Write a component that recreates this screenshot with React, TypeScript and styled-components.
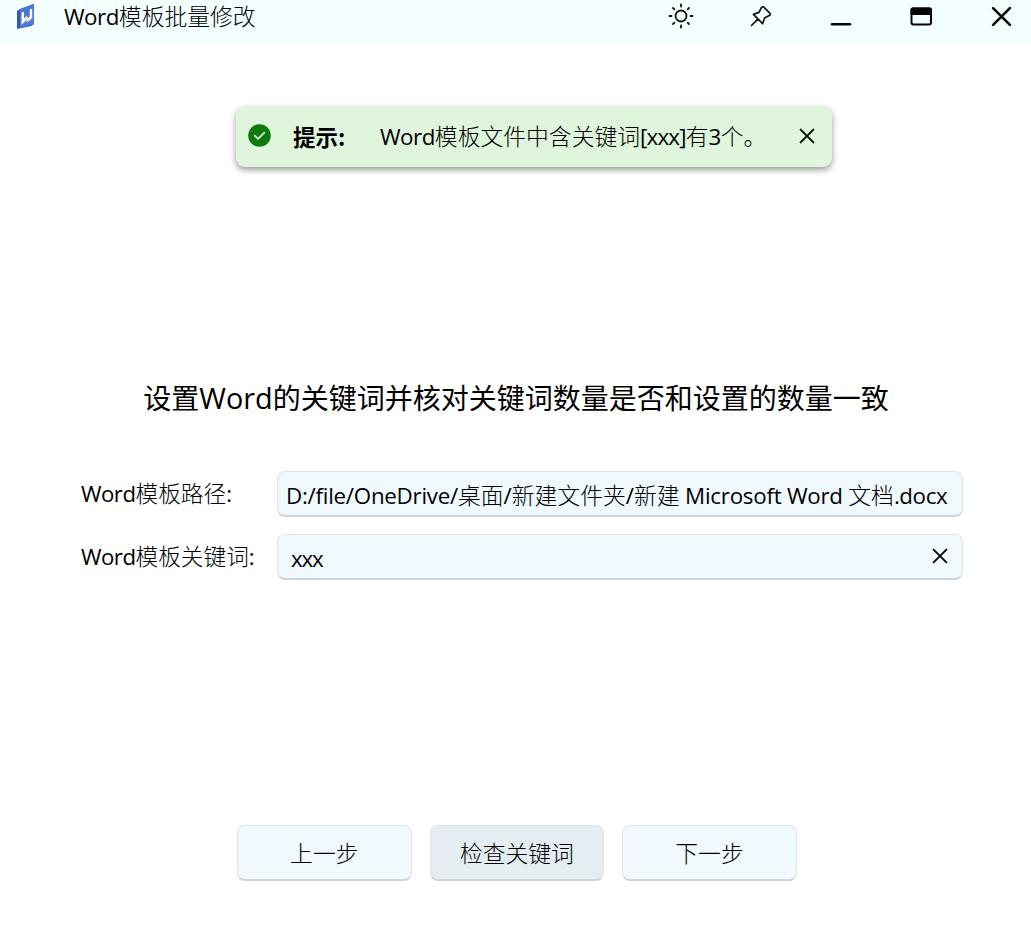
import React from 'react';
import styled, { createGlobalStyle } from 'styled-components';

const Global = createGlobalStyle`
  * { box-sizing: border-box; }
  body { margin: 0; background: #fff; }
`;

const Window = styled.div`
  position: relative;
  width: 1031px;
  height: 946px;
  overflow: hidden;
  display: flex;
  flex-direction: column;
  background: #fff;
  color: #000;
  font-family: 'Noto Sans CJK SC', sans-serif;
  font-size: 22.8px;
  font-weight: 300;
  line-height: 32px;
  white-space: nowrap;
`;

const Latin = styled.span<{ $track?: number; $scale?: number }>`
  font-family: 'Open Sans', 'Noto Sans', sans-serif;
  font-weight: 400;
  font-size: ${p => p.$scale ?? 0.98}em;
  letter-spacing: ${p => p.$track ?? -0.5}px;
`;

const TitleBar = styled.header`
  height: 43px;
  flex: none;
  display: flex;
  align-items: flex-start;
  background: #f3ffff;
  padding-left: 16px;
  svg { display: block; }
`;

const Logo = styled.svg`
  margin: 3px 29px 0 0;
`;

const Title = styled.div`
  flex: 1;
`;

const WindowButtons = styled.div`
  display: grid;
  grid-template-columns: repeat(5, 80.3px);
  width: 390.5px;
`;

const WindowButton = styled.button`
  width: 80px;
  height: 32px;
  padding: 0;
  border: 0;
  background: none;
  display: flex;
  align-items: center;
  justify-content: center;
`;

const Toast = styled.div`
  position: absolute;
  left: 236px;
  top: 106px;
  width: 596px;
  height: 61px;
  border-radius: 9px;
  background: #dff6dd;
  box-shadow: 0 3px 6px rgba(0, 0, 0, 0.4);
  display: flex;
  align-items: center;
  padding: 0 17.5px 2px 11.5px;
`;

const ToastLabel = styled.strong`
  width: 87px;
  margin-left: 22.5px;
  font-size: 22.5px;
  font-weight: 600;
`;

const ToastText = styled.span`
  flex: 1;
  padding-top: 1px;
`;

const Heading = styled.h1`
  margin: 334px 0 0 1px;
  font-size: 28px;
  font-weight: 400;
  line-height: 40px;
  text-align: center;
`;

const Form = styled.div`
  margin: 53px 68px 0 81px;
  display: grid;
  grid-template-columns: 196px 1fr;
  row-gap: 17px;
`;

const Label = styled.label`
  font-size: 22.67px;
  line-height: 43px;
`;

const Field = styled.div<{ $inset: number; $drop?: number }>`
  height: 46px;
  display: flex;
  align-items: center;
  justify-content: space-between;
  padding: ${p => p.$drop ?? 3}px 14px 0 ${p => p.$inset}px;
  border: 1px solid #e0e3e5;
  border-bottom: 2px solid #d3d2d6;
  border-radius: 8px;
  background: #f0f9fe;
  svg { margin-top: -6px; }
`;

const Actions = styled.div`
  margin: 245px 0 0 237px;
  display: flex;
  gap: 18px;
`;

const ActionButton = styled.button<{ $pressed?: boolean }>`
  width: 174.6px;
  height: 56px;
  padding: 0;
  border: 1px solid #e0e6e8;
  border-bottom: 2px solid #d2d4d6;
  border-radius: 8px;
  background: ${p => (p.$pressed ? '#e4edf2' : '#f0f9fe')};
  color: #000;
  font: inherit;
`;

const Cross = ({ size, stroke }: { size: number; stroke: number }) => (
  <svg width={size} height={size} viewBox="0 0 20 20" fill="none" stroke="#0a0a0a" strokeWidth={stroke} strokeLinecap="round">
    <path d="M2 2 18 18M18 2 2 18" />
  </svg>
);

export default function App() {
  return (
    <>
      <Global />
      <Window>
        <TitleBar>
          <Logo width="19" height="27" viewBox="0 0 19 27">
            <path d="M1 8 4 6 18 1V21L15 23 1 26Z" fill="#3157b6" />
            <path d="M4 6 18 1V21L4 25Z" fill="#4c79d8" />
            <path d="M6.5 9.5V19l3-2.5 2 1.2L15 15V6.500" fill="none" stroke="#aeb7ca" strokeWidth="3" />
            <path d="M7 9V18.500L10.500 14.500 12 16.500 15 14V6" fill="none" stroke="#fff" strokeWidth="2" />
          </Logo>
          <Title><Latin>Word</Latin>模板批量修改</Title>
          <WindowButtons>
            <WindowButton aria-label="Theme">
              <svg width="26" height="26" viewBox="0 0 26 26" fill="none" stroke="#111" strokeWidth="1.800" strokeLinecap="round">
                <circle cx="13" cy="13" r="5.500" />
                <path d="M13 1.500v2M13 22.500v2M1.500 13h2M22.500 13h2M5 5l1.400 1.400M19.600 19.600 21 21M5 21l1.400-1.400M19.600 6.400 21 5" />
              </svg>
            </WindowButton>
            <WindowButton aria-label="Pin">
              <svg width="22" height="22" viewBox="0 0 22 22" fill="none" stroke="#111" strokeWidth="1.700" strokeLinecap="round" strokeLinejoin="round">
                <path d="M13.800 2.200 19.800 8.200Q21 9.700 19.300 10.600L14.600 13 12.600 18.600 3.400 9.400 9 7.400 11.400 2.700Q12.300 1 13.800 2.200ZM7.800 14.200 1.500 20.500" />
              </svg>
            </WindowButton>
            <WindowButton aria-label="Minimize">
              <svg width="22" height="22" viewBox="0 0 22 22" stroke="#050505" strokeWidth="2.500" strokeLinecap="round">
                <path d="M2 19.200H20" />
              </svg>
            </WindowButton>
            <WindowButton aria-label="Maximize">
              <svg width="22" height="20" viewBox="0 0 22 20">
                <rect x="1.500" y="2.500" width="19.500" height="16" rx="2" fill="none" stroke="#050505" strokeWidth="2" />
                <path d="M.5 3.500Q.5 1.500 2.500 1.500H20Q22 1.500 22 3.500V9H.5Z" fill="#050505" />
              </svg>
            </WindowButton>
            <WindowButton aria-label="Close"><Cross size={21} stroke={2.5} /></WindowButton>
          </WindowButtons>
        </TitleBar>

        <Toast>
          <svg width="23" height="23" viewBox="0 0 23 23">
            <circle cx="11.500" cy="11.500" r="11.300" fill="#0f7b0f" />
            <path d="m6.700 11.700 3.300 3.200 6.300-6.300" fill="none" stroke="#e3f8e1" strokeWidth="1.700" strokeLinecap="round" strokeLinejoin="round" />
          </svg>
          <ToastLabel>提示:</ToastLabel>
          <ToastText><Latin>Word</Latin>模板文件中含关键词<Latin $track={-0.8}>[xxx]</Latin>有<Latin>3</Latin>个。</ToastText>
          <Cross size={16} stroke={2.5} />
        </Toast>

        <Heading>设置<Latin $track={0} $scale={1.03}>Word</Latin>的关键词并核对关键词数量是否和设置的数量一致</Heading>

        <Form>
          <Label><Latin>Word</Latin>模板路径<Latin>:</Latin></Label>
          <Field $inset={8}>
            <span><Latin $track={-0.25}>D:/file/OneDrive/</Latin>桌面<Latin $track={0}>/</Latin>新建文件夹<Latin $track={0}>/</Latin>新建<Latin $track={-0.25}> Microsoft Word </Latin>文档<Latin $track={-0.4}>.docx</Latin></span>
          </Field>
          <Label><Latin>Word</Latin>模板关键词<Latin>:</Latin></Label>
          <Field $inset={13} $drop={5}>
            <Latin $track={-1.2}>xxx</Latin>
            <Cross size={16} stroke={2.5} />
          </Field>
        </Form>

        <Actions>
          <ActionButton>上一步</ActionButton>
          <ActionButton $pressed>检查关键词</ActionButton>
          <ActionButton>下一步</ActionButton>
        </Actions>
      </Window>
    </>
  );
}
